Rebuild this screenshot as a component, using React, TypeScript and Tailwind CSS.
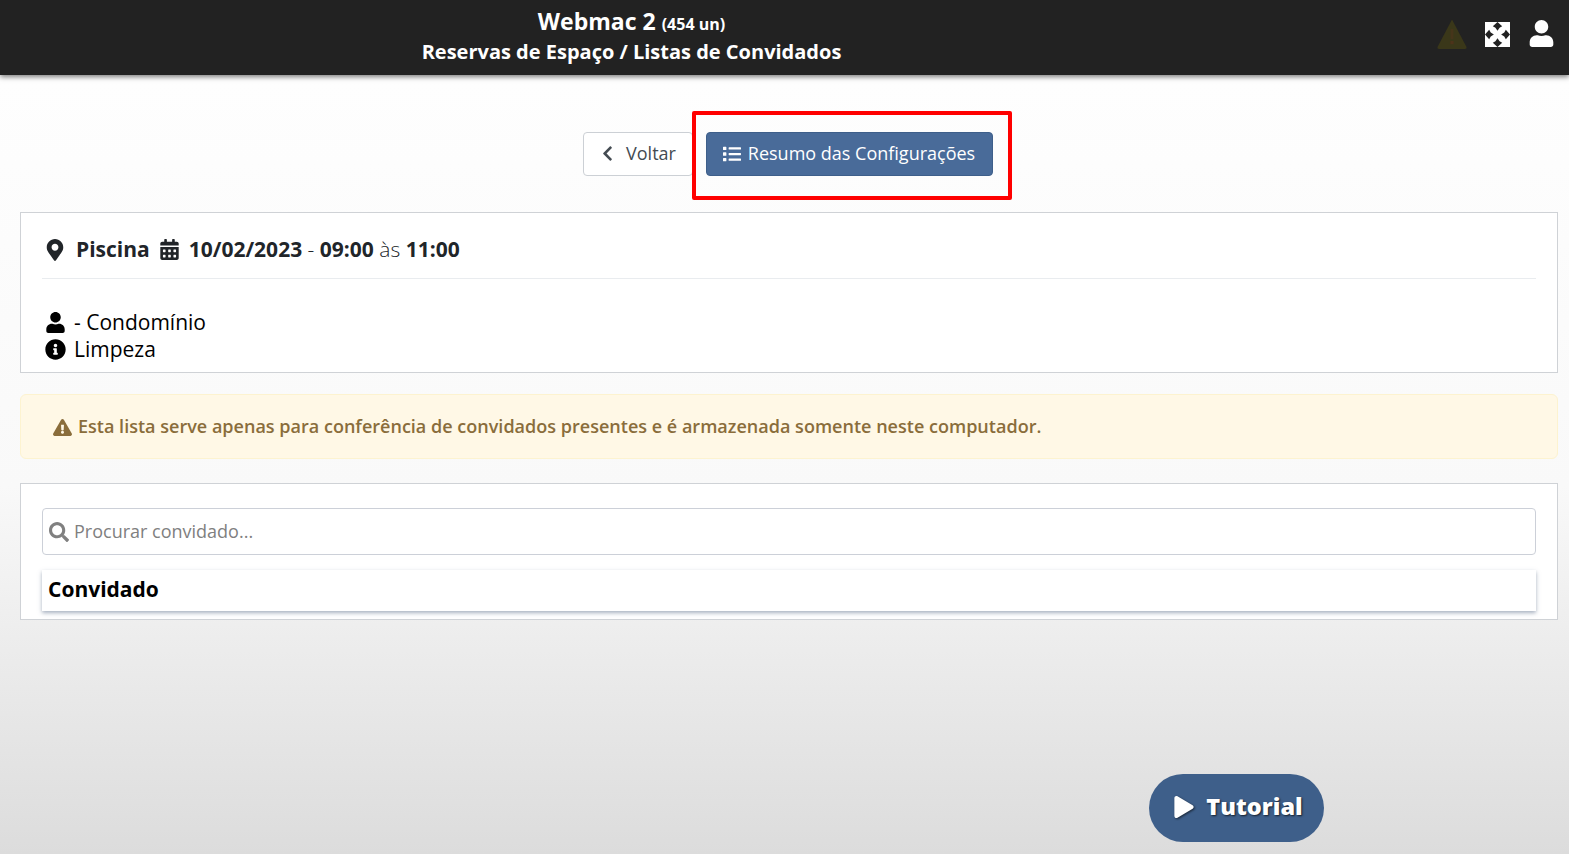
import { FaCalendarAlt, FaChevronLeft, FaExclamationTriangle, FaInfoCircle, FaList, FaMapMarkerAlt, FaPlay, FaSearch, FaUser } from 'react-icons/fa';

function ExpandIcon() {
  return (
    <svg viewBox="0 0 24 24" className="h-[25px] w-[25px]">
      <rect x="0" y="0" width="24" height="24" fill="#ffffff" />
      <g fill="#222222">
        <polygon points="12,0 7.5,4 10,5.5 12,8.5 14,5.5 16.5,4" />
        <polygon points="12,24 7.5,20 10,18.5 12,15.5 14,18.5 16.5,20" />
        <polygon points="0,12 4,7.5 5.5,10 8.5,12 5.5,14 4,16.5" />
        <polygon points="24,12 20,7.5 18.5,10 15.5,12 18.5,14 20,16.5" />
      </g>
    </svg>
  );
}

function DimWarning() {
  return (
    <svg viewBox="0 0 30 30" className="h-[30px] w-[30px]">
      <path d="M15 0.5 L29.5 28 Q30 30 28 30 L2 30 Q0 30 0.5 28 Z" fill="#3a3719" />
      <rect x="13.6" y="10" width="2.8" height="10" fill="#46351a" />
      <rect x="13.4" y="22" width="3.2" height="3.2" fill="#4d331a" />
    </svg>
  );
}

export default function App() {
  return (
    <div className="relative h-[854px] overflow-hidden bg-gradient-to-b from-white via-[#f9f9f9] via-[57%] to-[#dcdcdc] font-['Open_Sans',sans-serif] text-[#212529]">
      <header className="flex h-[75px] items-center bg-[#222222] shadow-[0_2px_5px_rgba(0,0,0,0.5)]">
        <div className="flex w-[1263px] flex-col items-center pb-[2px] text-white">
          <div className="-mt-[2px] flex h-[29px] items-baseline text-[23px] font-bold leading-[29px]">
            Webmac 2<span className="ml-[6px] text-[16px] font-bold">(454 un)</span>
          </div>
          <div className="mt-[2px] text-[20px] font-bold leading-[27px]">Reservas de Espaço / Listas de Convidados</div>
        </div>
        <div className="ml-auto flex items-center pr-[14px] pb-[8px]">
          <DimWarning />
          <div className="ml-[18px] mt-[2px]">
            <ExpandIcon />
          </div>
          <FaUser className="ml-[18px] text-[27px] text-white" />
        </div>
      </header>

      <main className="pl-5 pr-[11px]">
        <div className="flex justify-center gap-[13px] pt-[57px] pr-[3px]">
          <button className="flex h-[44px] w-[110px] items-center justify-center gap-[10px] rounded border border-[#ccd0d5] bg-white pb-[1px] text-[18px] text-[#444b52]">
            <FaChevronLeft className="text-[17px]" /> Voltar
          </button>
          <button className="flex h-[44px] w-[287px] items-center justify-center gap-[7px] rounded border border-[#3e5f8a] bg-[#496b99] pb-[1px] text-[18px] text-white">
            <FaList className="text-[18px]" /> Resumo das Configurações
          </button>
        </div>

        <section className="mt-[36px] h-[161px] border border-[#cfd2d6] bg-white px-[21px]">
          <div className="flex h-[66px] items-center gap-[10px] border-b border-[#e9ecef] pt-[8px] pl-[2px] text-[21px] font-bold text-[#212529]">
            <FaMapMarkerAlt className="text-[22px]" />
            <span>Piscina</span>
            <FaCalendarAlt className="-ml-[1px] text-[21px]" />
            <span className="-ml-[1px]">
              10/02/2023 <span className="font-light">-</span> 09:00 <span className="font-light">às</span> 11:00
            </span>
          </div>
          <div className="pt-[30px] text-[21px] leading-[27px] text-black">
            <div className="flex items-center gap-[8px]">
              <FaUser className="ml-[3px] w-[21px] text-[21px]" />
              <span>- Condomínio</span>
            </div>
            <div className="flex items-center gap-[8px]">
              <FaInfoCircle className="ml-[3px] w-[21px] text-[21px]" />
              <span>Limpeza</span>
            </div>
          </div>
        </section>

        <div className="mt-[21px] flex h-[65px] items-center gap-[6px] rounded-md border border-[#fdf3d0] bg-[#fff8e6] pl-[32px] pt-[1px] text-[18.04px] font-semibold text-[#8a6d3b]">
          <FaExclamationTriangle className="text-[19px]" />
          <span>Esta lista serve apenas para conferência de convidados presentes e é armazenada somente neste computador.</span>
        </div>

        <section className="mt-[24px] h-[137px] border border-[#cfd2d6] bg-white px-[21px] pt-[24px]">
          <div className="flex h-[47px] items-center gap-[5px] rounded border border-[#ccd0d8] bg-white pl-[6px]">
            <FaSearch className="text-[20px] text-[#808080]" />
            <span className="text-[18px] text-[#808080]">Procurar convidado...</span>
          </div>
          <div className="mt-[15px] flex h-[41px] items-center bg-white pb-[2px] pl-[6px] text-[21px] font-bold text-black shadow-[0_2px_4px_rgba(80,100,130,0.5)]">
            Convidado
          </div>
        </section>
      </main>

      {/* anotacao vermelha em volta do botao */}
      <div className="absolute left-[692px] top-[111px] h-[89px] w-[320px] rounded-[2px] border-[4px] border-[#ff0000]" />

      <button className="absolute left-[1149px] top-[774px] flex h-[68px] w-[175px] items-center justify-center gap-[11px] rounded-full bg-[#3e5f8a] pb-[2px] pl-[3px] text-[23.5px] font-extrabold text-white [text-shadow:1px_1px_2px_rgba(0,0,0,0.7)]">
        <FaPlay className="text-[22px] drop-shadow-[1px_1px_1px_rgba(0,0,0,0.6)]" /> Tutorial
      </button>
    </div>
  );
}
